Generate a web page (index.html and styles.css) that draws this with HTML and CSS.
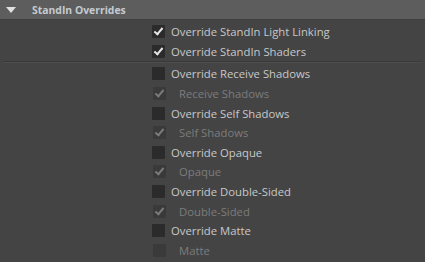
FILE: index.html
```html
<!DOCTYPE html>
<html lang="en">
  <head>
    <meta charset="UTF-8">
    <title>StandIn Overrides</title>
    <link rel="stylesheet" href="styles.css">
  </head>
  <body>
    <div class="panel">
      <div class="panel-header">
        <span class="arrow"></span>
        <span class="panel-title">StandIn Overrides</span>
      </div>

      <div class="group first">
        <div class="row"><span class="box checked"></span><span class="label">Override StandIn Light Linking</span></div>
        <div class="row"><span class="box checked"></span><span class="label">Override StandIn Shaders</span></div>
      </div>

      <hr class="separator" />

      <div class="group">
        <div class="row"><span class="box"></span><span class="label">Override Receive Shadows</span></div>
        <div class="row sub"><span class="box checked"></span><span class="label">Receive Shadows</span></div>
        <div class="row"><span class="box"></span><span class="label">Override Self Shadows</span></div>
        <div class="row sub"><span class="box checked"></span><span class="label">Self Shadows</span></div>
        <div class="row"><span class="box"></span><span class="label">Override Opaque</span></div>
        <div class="row sub"><span class="box checked"></span><span class="label">Opaque</span></div>
        <div class="row"><span class="box"></span><span class="label">Override Double-Sided</span></div>
        <div class="row sub"><span class="box checked"></span><span class="label">Double-Sided</span></div>
        <div class="row"><span class="box"></span><span class="label">Override Matte</span></div>
        <div class="row sub"><span class="box"></span><span class="label">Matte</span></div>
      </div>
    </div>
  </body>
</html>
```

FILE: styles.css
```css
body {
  margin: 0;
  background: #444444;
  font: 11.3px "Open Sans", sans-serif;
  color: #c8c8c8;
}

.panel {
  width: 425px;
  height: 262px;
  overflow: hidden;
  background: #444444;
}

.panel-header {
  display: flex;
  align-items: center;
  height: 19px;
  background: #5d5d5d;
  border-bottom: 1px solid #3f3f3f;
}
.arrow {
  width: 0;
  height: 0;
  margin-left: 6px;
  border-left: 5px solid transparent;
  border-right: 5px solid transparent;
  border-top: 6px solid #e0e0e0;
}
.panel-title {
  margin-left: 16px;
  font-size: 10.4px;
  font-weight: bold;
  color: #c4cad0;
}

.group {
  padding-top: 1px;
}
.group.first {
  padding-top: 2px;
}

.separator {
  margin: 0 3px 0 3px;
  border: none;
  border-top: 1px solid #393939;
  border-bottom: 1px solid #4d4d4d;
}

.row {
  display: flex;
  align-items: center;
  height: 19.6px;
  padding-left: 152px;
}

.box {
  position: relative;
  width: 13px;
  height: 13px;
  background: #2b2b2b;
  border-radius: 1px;
}
.box.checked::after {
  content: "";
  position: absolute;
  left: 4px;
  top: 1px;
  width: 3px;
  height: 7px;
  border-right: 2px solid #e6e6e6;
  border-bottom: 2px solid #e6e6e6;
  transform: rotate(40deg);
}

.label {
  margin-left: 6px;
}

.row.sub .box {
  margin-left: 1px;
  background: #3a3a3a;
}
.row.sub .box.checked::after {
  border-color: #7a7a7a;
}
.row.sub .label {
  margin-left: 13px;
  color: #7c7c7c;
}
```
